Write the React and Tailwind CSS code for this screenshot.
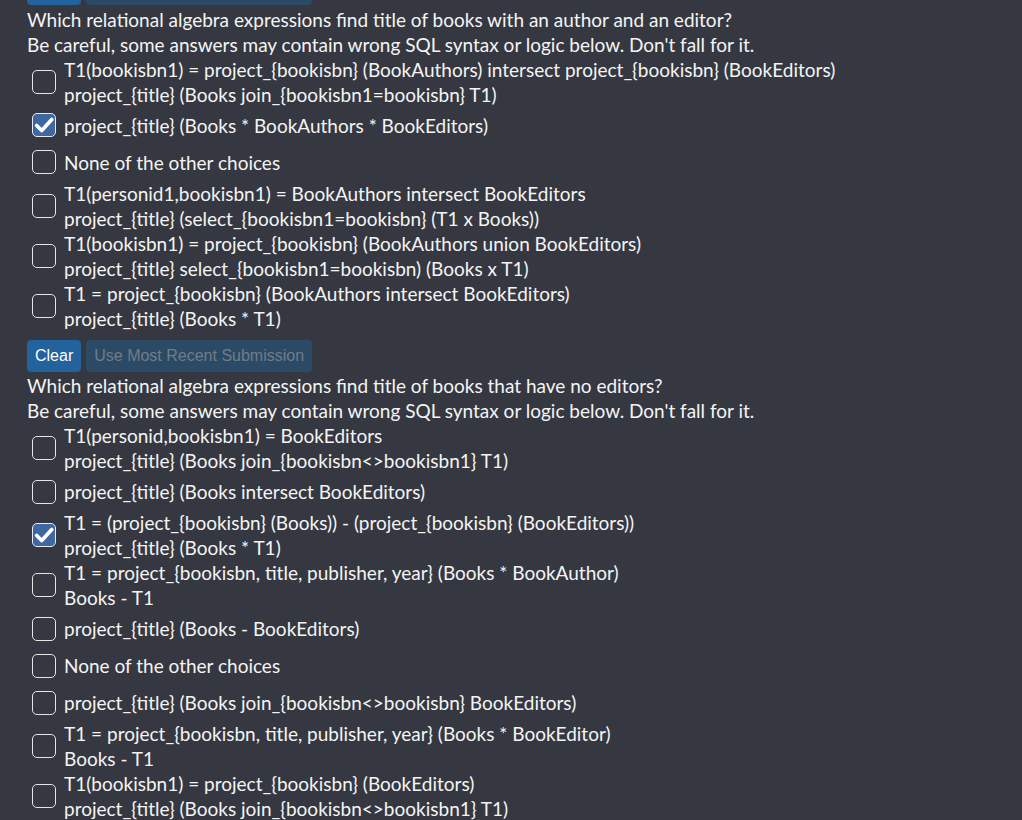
import React from "react";

const questions = [
  {
    prompt: "Which relational algebra expressions find title of books with an author and an editor?",
    options: [
      {
        lines: [
          "T1(bookisbn1) = project_{bookisbn} (BookAuthors) intersect project_{bookisbn} (BookEditors)",
          "project_{title} (Books join_{bookisbn1=bookisbn} T1)",
        ],
      },
      { lines: ["project_{title} (Books * BookAuthors * BookEditors)"], checked: true },
      { lines: ["None of the other choices"] },
      {
        lines: [
          "T1(personid1,bookisbn1) = BookAuthors intersect BookEditors",
          "project_{title} (select_{bookisbn1=bookisbn} (T1 x Books))",
        ],
      },
      {
        lines: [
          "T1(bookisbn1) = project_{bookisbn} (BookAuthors union BookEditors)",
          "project_{title} select_{bookisbn1=bookisbn) (Books x T1)",
        ],
      },
      {
        lines: [
          "T1 = project_{bookisbn} (BookAuthors intersect BookEditors)",
          "project_{title} (Books * T1)",
        ],
      },
    ],
  },
  {
    prompt: "Which relational algebra expressions find title of books that have no editors?",
    options: [
      {
        lines: [
          "T1(personid,bookisbn1) = BookEditors",
          "project_{title} (Books join_{bookisbn<>bookisbn1} T1)",
        ],
      },
      { lines: ["project_{title} (Books intersect BookEditors)"] },
      {
        lines: [
          "T1 = (project_{bookisbn} (Books)) - (project_{bookisbn} (BookEditors))",
          "project_{title} (Books * T1)",
        ],
        checked: true,
      },
      {
        lines: [
          "T1 = project_{bookisbn, title, publisher, year} (Books * BookAuthor)",
          "Books - T1",
        ],
      },
      { lines: ["project_{title} (Books - BookEditors)"] },
      { lines: ["None of the other choices"] },
      { lines: ["project_{title} (Books join_{bookisbn<>bookisbn} BookEditors)"] },
      {
        lines: [
          "T1 = project_{bookisbn, title, publisher, year} (Books * BookEditor)",
          "Books - T1",
        ],
      },
      {
        lines: [
          "T1(bookisbn1) = project_{bookisbn} (BookEditors)",
          "project_{title} (Books join_{bookisbn<>bookisbn1} T1)",
        ],
      },
    ],
  },
];

function Checkbox({ checked }) {
  if (checked) {
    return (
      <span className="flex h-6 w-6 shrink-0 items-center justify-center rounded-[5px] border-[1.5px] border-[#e8ecf4] bg-[#3f68a3]">
        <svg viewBox="0 0 24 24" className="h-[22px] w-[22px]">
          <path
            d="M4 12.5 L9.5 18 L20.5 6"
            fill="none"
            stroke="#ffffff"
            strokeWidth="4"
            strokeLinecap="round"
            strokeLinejoin="round"
          />
        </svg>
      </span>
    );
  }
  return <span className="block h-6 w-6 shrink-0 rounded-[5px] border-[1.5px] border-[#e6e6e6]" />;
}

function Buttons() {
  return (
    <div className="flex gap-[5px] font-['Liberation_Sans',Arial,sans-serif] text-[16px]">
      <button className="h-[32px] rounded-[4px] bg-[#22629d] px-2 text-white">Clear</button>
      <button disabled className="h-[32px] rounded-[4px] bg-[#2b4a66] px-2 text-[#727c86]">
        Use Most Recent Submission
      </button>
    </div>
  );
}

function Question({ q }) {
  return (
    <div className="mt-[1.5px]">
      <div className="leading-[25px]">
        <div>{q.prompt}</div>
        <div>Be careful, some answers may contain wrong SQL syntax or logic below. Don't fall for it.</div>
      </div>
      {q.options.map((opt, i) => (
        <div
          key={i}
          className={`flex items-center gap-2 pl-[5px] ${opt.lines.length > 1 ? "" : "min-h-[37px]"}`}
        >
          <Checkbox checked={opt.checked} />
          <div className="leading-[25px]">
            {opt.lines.map((l, j) => (
              <div key={j}>{l}</div>
            ))}
          </div>
        </div>
      ))}
    </div>
  );
}

export default function App() {
  return (
    <div className="h-[820px] overflow-hidden bg-[#353841] pl-[27px] font-['Lato','Noto_Sans',sans-serif] text-[19px] text-[#f4f4f4]">
      <div className="-mt-[27px]">
        <Buttons />
      </div>
      <Question q={questions[0]} />
      <div className="mt-[9px]">
        <Buttons />
      </div>
      <Question q={questions[1]} />
    </div>
  );
}
